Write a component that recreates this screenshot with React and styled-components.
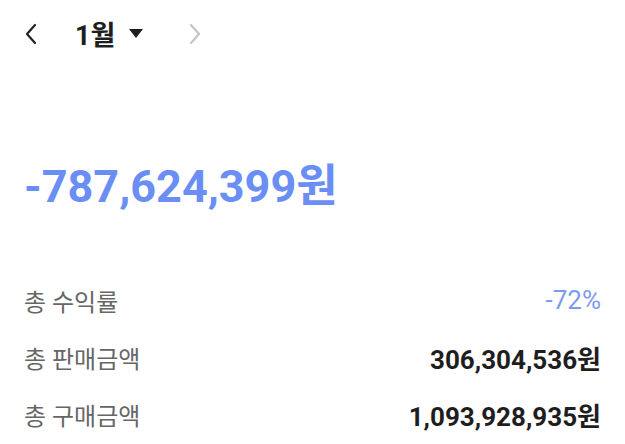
import React from 'react'
import styled, { createGlobalStyle } from 'styled-components'

const GlobalStyle = createGlobalStyle`
  html, body {
    margin: 0;
    padding: 0;
    background: #fff;
  }
  body {
    font-family: Roboto, "Noto Sans CJK KR", sans-serif;
    color: #222;
  }
`;

const Page = styled.div`
  width: 625px;
  height: 444px;
  padding: 0 24px;
  box-sizing: border-box;
  overflow: hidden;
`;

const Header = styled.div`
  display: flex;
  align-items: center;
  height: 67px;
`;

const NavButton = styled.button`
  border: 0;
  background: none;
  padding: 0;
  width: 14px;
  height: 24px;
  display: flex;
  align-items: center;
  justify-content: center;
  color: ${p => (p.$disabled ? '#c4c4c4' : '#222')};
`;

const MonthPicker = styled.div`
  display: flex;
  align-items: center;
  gap: 14px;
  margin: 0 45px 0 37px;
  font-size: 27px;
  font-weight: 700;
  color: #1e1e1e;
`;

const Summary = styled.div`
  padding-top: 93px;
`;

const Total = styled.div`
  font-size: 45px;
  font-weight: 700;
  color: #6b8ef5;
  line-height: 54px;
`;

const List = styled.div`
  margin-top: 68px;
  display: flex;
  flex-direction: column;
  gap: 21px;
`;

const Row = styled.div`
  display: flex;
  justify-content: space-between;
  align-items: center;
  height: 36px;
`;

const Label = styled.span`
  font-size: 24px;
  color: #666;
`;

const Value = styled.span`
  font-size: 26px;
  color: ${p => (p.$accent ? '#7c9bf0' : '#1e1e1e')};
  font-weight: ${p => (p.$accent ? 400 : 700)};
`;

const Chevron = ({ dir }) => (
  <svg width="14" height="22" viewBox="0 0 14 22" fill="none">
    <path
      d={dir === 'left' ? 'M11 2 L3 11 L11 20' : 'M3 2 L11 11 L3 20'}
      stroke="currentColor"
      strokeWidth="2.2"
      strokeLinecap="round"
      strokeLinejoin="round"
    />
  </svg>
);

const rows = [
  { label: '총 수익률', value: '-72%', accent: true },
  { label: '총 판매금액', value: '306,304,536원' },
  { label: '총 구매금액', value: '1,093,928,935원' },
];

const App = () => {
  return (
    <>
      <GlobalStyle />
      <Page>
        <Header>
          <NavButton><Chevron dir="left" /></NavButton>
          <MonthPicker>
            1월
            <svg width="14" height="9" viewBox="0 0 14 9">
              <path d="M0 0 H14 L7 9 Z" fill="#1e1e1e" />
            </svg>
          </MonthPicker>
          <NavButton $disabled><Chevron dir="right" /></NavButton>
        </Header>
        <Summary>
          <Total>-787,624,399원</Total>
          <List>
            {rows.map(r => (
              <Row key={r.label}>
                <Label>{r.label}</Label>
                <Value $accent={r.accent}>{r.value}</Value>
              </Row>
            ))}
          </List>
        </Summary>
      </Page>
    </>
  )
}

export default App
